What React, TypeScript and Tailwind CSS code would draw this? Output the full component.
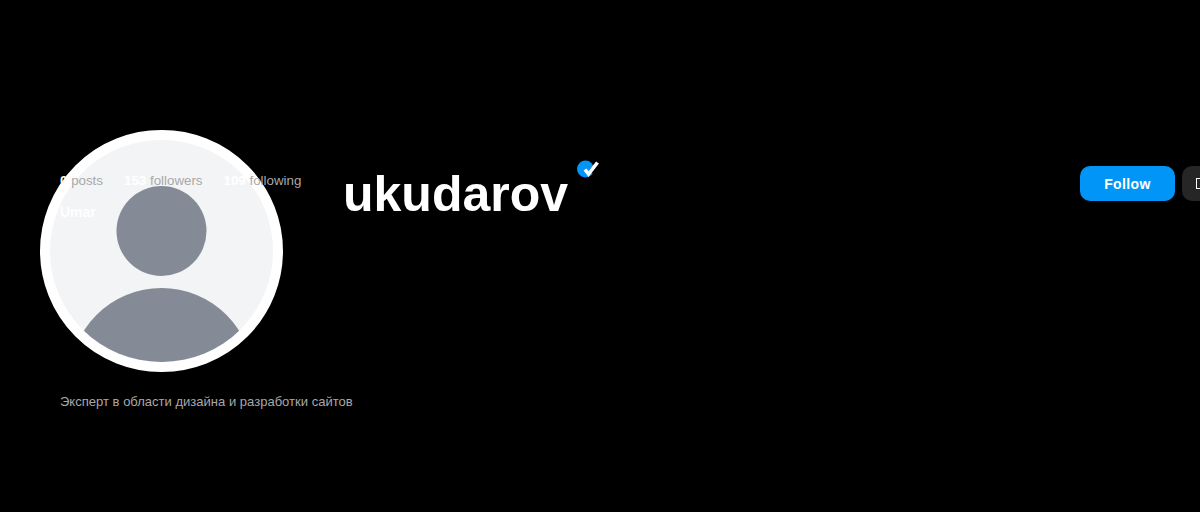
import React from 'react';

const Avatar: React.FC = () => (
  <div className="absolute left-[40px] top-[130px] h-[242px] w-[243px] overflow-hidden rounded-full border-[10px] border-white bg-[#f3f4f6]">
    <svg viewBox="0 0 223 222" className="block h-full w-full">
      <circle cx="111.5" cy="91" r="45" fill="#858b96" />
      <circle cx="111.5" cy="240" r="92" fill="#858b96" />
    </svg>
  </div>
);

const VerifiedBadge: React.FC = () => (
  <svg viewBox="0 0 24 20" className="mt-[-1px] ml-[8px] h-[20px] w-[24px] shrink-0">
    <circle cx="9.5" cy="10" r="8.5" fill="#0095f6" />
    <path d="M15 13 L22 4" fill="none" stroke="#000000" strokeWidth="5" />
    <path d="M9 10.5 L12.5 15 L21.5 3.5" fill="none" stroke="#ffffff" strokeWidth="3.6" />
  </svg>
);

const Stat: React.FC<{ value: string; label: string }> = ({ value, label }) => (
  <span className="text-[#a8a8a8]">
    <b className="font-bold text-white">{value}</b> {label}
  </span>
);

export default function App() {
  return (
    <div className="relative h-[512px] w-[1200px] overflow-hidden bg-black font-['Liberation_Sans',Arial,sans-serif]">
      <Avatar />
      <div className="relative flex pt-[160px]">
        <div className="ml-[60px] w-[283px] shrink-0 pt-[12px]">
          <div className="flex gap-[21px] text-[13.33px] leading-[18px]">
            <Stat value="0" label="posts" />
            <Stat value="153" label="followers" />
            <Stat value="109" label="following" />
          </div>
          <div className="mt-[13px] text-[14px] leading-[18px] font-bold text-white">Umar</div>
          <p className="mt-[172px] text-[13.04px] leading-[18px] whitespace-nowrap text-[#a8a8a8]">
            Эксперт в области дизайна и разработки сайтов
          </p>
        </div>
        <div className="flex items-start">
          <h1 className="text-[50px] leading-[68px] font-bold text-white">ukudarov</h1>
          <VerifiedBadge />
        </div>
        <div className="mt-[6px] mr-[-22px] ml-auto flex shrink-0 items-start gap-[7px]">
          <button className="h-[35px] w-[95px] rounded-[10px] bg-[#0095f6] pt-[1px] text-[14px] font-bold tracking-[0.4px] text-white">
            Follow
          </button>
          <button className="flex h-[35px] w-[40px] items-center rounded-[10px] bg-[#262626] pl-[14px]">
            <span className="block h-[11px] w-[7px] border border-white" />
          </button>
        </div>
      </div>
    </div>
  );
}
